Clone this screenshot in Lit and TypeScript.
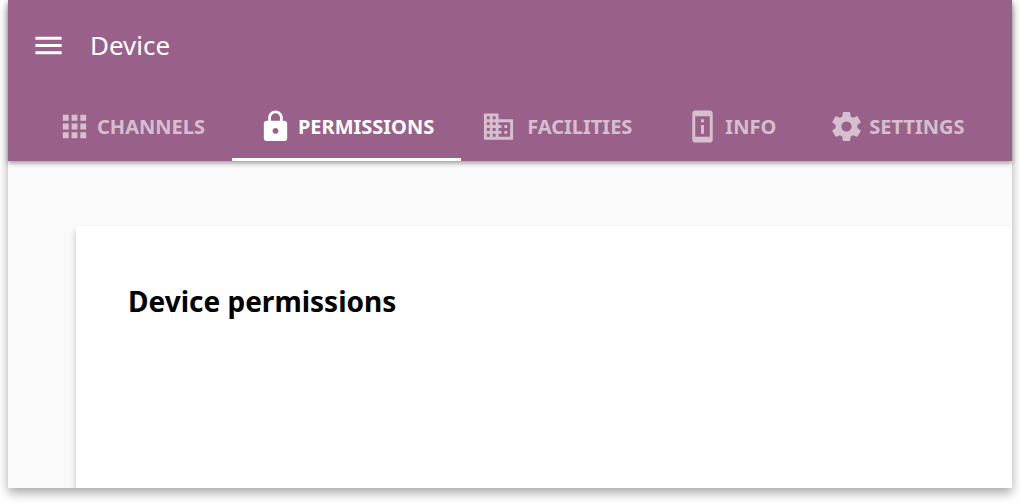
import { LitElement, html, css, svg } from "lit";
import { customElement, state } from "lit/decorators.js";
import { classMap } from "lit/directives/class-map.js";

interface Tab {
  id: string;
  label: string;
  path: string;
  roomy?: boolean;
}

const TABS: Tab[] = [
  {
    id: "channels",
    label: "Channels",
    path: "M4 8h4V4H4v4zm6 12h4v-4h-4v4zm-6 0h4v-4H4v4zm0-6h4v-4H4v4zm6 0h4v-4h-4v4zm6-10v4h4V4h-4zm-6 4h4V4h-4v4zm6 6h4v-4h-4v4zm0 6h4v-4h-4v4z",
  },
  {
    id: "permissions",
    label: "Permissions",
    path: "M18 8h-1V6c0-2.76-2.24-5-5-5S7 3.24 7 6v2H6c-1.1 0-2 .9-2 2v10c0 1.1.9 2 2 2h12c1.1 0 2-.9 2-2V10c0-1.1-.9-2-2-2zm-6 9c-1.1 0-2-.9-2-2s.9-2 2-2 2 .9 2 2-.9 2-2 2zm3.1-9H8.9V6c0-1.71 1.39-3.1 3.1-3.1 1.71 0 3.1 1.39 3.1 3.1v2z",
  },
  {
    id: "facilities",
    label: "Facilities",
    path: "M12 7V3H2v18h20V7H12zM6 19H4v-2h2v2zm0-4H4v-2h2v2zm0-4H4V9h2v2zm0-4H4V5h2v2zm4 12H8v-2h2v2zm0-4H8v-2h2v2zm0-4H8V9h2v2zm0-4H8V5h2v2zm10 12h-8v-2h2v-2h-2v-2h2v-2h-2V9h8v10zm-2-8h-2v2h2v-2zm0 4h-2v2h2v-2z",
    roomy: true,
  },
  {
    id: "info",
    label: "Info",
    path: "M13 7h-2v2h2V7zm0 4h-2v6h2v-6zm4-9.99L7 1c-1.1 0-2 .9-2 2v18c0 1.1.9 2 2 2h10c1.1 0 2-.9 2-2V3c0-1.1-.9-1.99-2-1.99zM17 19H7V5h10v14z",
  },
  {
    id: "settings",
    label: "Settings",
    path: "M19.43 12.98c.04-.32.07-.64.07-.98s-.03-.66-.07-.98l2.11-1.65c.19-.15.24-.42.12-.64l-2-3.46c-.12-.22-.39-.3-.61-.22l-2.49 1c-.52-.4-1.08-.73-1.69-.98l-.38-2.65C14.46 2.18 14.25 2 14 2h-4c-.25 0-.46.18-.49.42l-.38 2.65c-.61.25-1.17.59-1.69.98l-2.49-1c-.23-.09-.49 0-.61.22l-2 3.46c-.13.22-.07.49.12.64l2.11 1.65c-.04.32-.07.65-.07.98s.03.66.07.98l-2.11 1.65c-.19.15-.24.42-.12.64l2 3.46c.12.22.39.3.61.22l2.49-1c.52.4 1.08.73 1.69.98l.38 2.65c.03.24.24.42.49.42h4c.25 0 .46-.18.49-.42l.38-2.65c.61-.25 1.17-.59 1.69-.98l2.49 1c.23.09.49 0 .61-.22l2-3.46c.12-.22.07-.49-.12-.64l-2.11-1.65zM12 15.5c-1.93 0-3.5-1.57-3.5-3.5s1.57-3.5 3.5-3.5 3.5 1.57 3.5 3.5-1.57 3.5-3.5 3.5z",
  },
];

const MENU_PATH = "M3 18h18v-2H3v2zm0-5h18v-2H3v2zm0-7v2h18V6H3z";

const icon = (path: string) => html`
  <svg class="icon" viewBox="0 0 24 24" aria-hidden="true">${svg`<path d=${path} />`}</svg>
`;

@customElement("app-root")
export class AppRoot extends LitElement {
  @state() private active = "permissions";

  static styles = css`
    :host {
      display: block;
      box-sizing: border-box;
      height: 100vh;
      padding: 0 8px 16px;
      overflow: hidden;
      background: #fff;
      font-family: "Noto Sans", sans-serif;
    }
    .window {
      display: flex;
      flex-direction: column;
      height: 100%;
      background: #fafafa;
      box-shadow: 0 5px 10px rgba(0, 0, 0, 0.34);
    }
    .header {
      flex: none;
      z-index: 1;
      background: #996189;
      color: #fff;
      box-shadow: 0 2px 5px rgba(0, 0, 0, 0.4);
    }
    .bar {
      display: flex;
      align-items: center;
      gap: 24px;
      box-sizing: border-box;
      height: 92px;
      padding: 0 23px 2px;
    }
    .menu {
      display: flex;
      padding: 0;
      border: 0;
      background: none;
      color: inherit;
      cursor: pointer;
    }
    .icon {
      display: block;
      flex: none;
      width: 35px;
      height: 35px;
      fill: currentColor;
    }
    .title {
      margin: 0;
      font-size: 26px;
      line-height: 36px;
      font-weight: 400;
    }
    .tabs {
      display: flex;
      height: 69px;
      padding-left: 23px;
    }
    .tab {
      display: flex;
      flex: none;
      align-items: center;
      gap: 5px;
      box-sizing: border-box;
      padding: 3px 27px 0 26px;
      border: 0;
      border-bottom: 3px solid transparent;
      background: none;
      color: rgba(255, 255, 255, 0.6);
      font: 700 20px/28px "Noto Sans", sans-serif;
      text-transform: uppercase;
      cursor: pointer;
    }
    .roomy {
      gap: 11px;
      padding-left: 20px;
    }
    .active {
      border-bottom-color: #fff;
      color: #fff;
    }
    .content {
      display: flex;
      flex: 1;
      min-height: 0;
      padding: 65px 0 0 68px;
      overflow: hidden;
    }
    .card {
      flex: 1;
      padding: 55px 52px;
      border-radius: 3px 0 0 0;
      background: #fff;
      box-shadow: 0 4px 6px rgba(0, 0, 0, 0.24);
    }
    .heading {
      margin: 0;
      font-size: 28px;
      line-height: 40px;
      font-weight: 700;
      color: #000;
    }
  `;

  render() {
    return html`
      <div class="window">
        <header class="header">
          <div class="bar">
            <button class="menu" type="button" aria-label="Menu">${icon(MENU_PATH)}</button>
            <h1 class="title">Device</h1>
          </div>
          <nav class="tabs" role="tablist">
            ${TABS.map(
              (tab) => html`
                <button
                  type="button"
                  role="tab"
                  aria-selected=${tab.id === this.active ? "true" : "false"}
                  class=${classMap({ tab: true, roomy: !!tab.roomy, active: tab.id === this.active })}
                  @click=${() => (this.active = tab.id)}
                >
                  ${icon(tab.path)}<span>${tab.label}</span>
                </button>
              `
            )}
          </nav>
        </header>
        <main class="content">
          <section class="card">
            <h2 class="heading">Device permissions</h2>
          </section>
        </main>
      </div>
    `;
  }
}
